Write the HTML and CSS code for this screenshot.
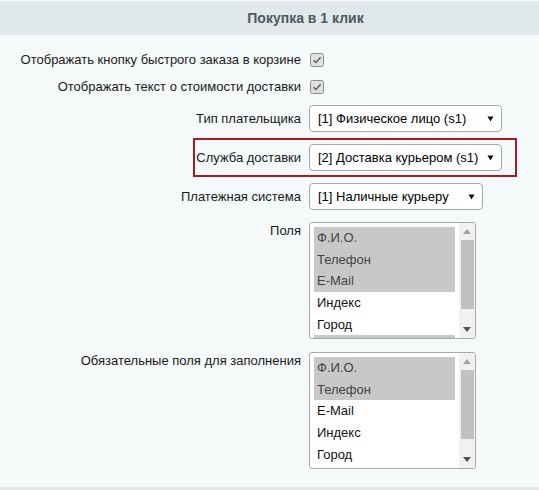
FILE: index.html
```
<!DOCTYPE html>
<html lang="ru">
<head>
<meta charset="utf-8">
<link rel="stylesheet" href="styles.css">
</head>
<body>
<div class="panel">
  <div class="head">Покупка в 1 клик</div>
  <div class="form">
    <div class="row row-cb">
      <label class="lbl">Отображать кнопку быстрого заказа в корзине</label>
      <span class="cb"><svg width="14" height="14" viewBox="0 0 14 14"><rect x="0.5" y="0.5" width="13" height="13" rx="2" fill="#dfdfdf" stroke="#8c8c8c"/><path d="M3.5 7.2 L6 9.6 L10.6 4.2" fill="none" stroke="#5a5a5a" stroke-width="1.4"/></svg></span>
    </div>
    <div class="row row-cb">
      <label class="lbl">Отображать текст о стоимости доставки</label>
      <span class="cb"><svg width="14" height="14" viewBox="0 0 14 14"><rect x="0.5" y="0.5" width="13" height="13" rx="2" fill="#dfdfdf" stroke="#8c8c8c"/><path d="M3.5 7.2 L6 9.6 L10.6 4.2" fill="none" stroke="#5a5a5a" stroke-width="1.4"/></svg></span>
    </div>
    <div class="row row-sel first">
      <label class="lbl">Тип плательщика</label>
      <div class="sel w-wide"><span>[1] Физическое лицо (s1)</span><svg class="arr" width="7" height="6" viewBox="0 0 7 6"><polygon points="0.5,0.5 6.5,0.5 3.5,5.5" fill="#111"/></svg></div>
    </div>
    <div class="row row-sel hl">
      <label class="lbl">Служба доставки</label>
      <div class="sel w-wide"><span>[2] Доставка курьером (s1)</span><svg class="arr" width="7" height="6" viewBox="0 0 7 6"><polygon points="0.5,0.5 6.5,0.5 3.5,5.5" fill="#111"/></svg></div>
    </div>
    <div class="row row-sel">
      <label class="lbl">Платежная система</label>
      <div class="sel w-narrow"><span>[1] Наличные курьеру</span><svg class="arr" width="7" height="6" viewBox="0 0 7 6"><polygon points="0.5,0.5 6.5,0.5 3.5,5.5" fill="#111"/></svg></div>
    </div>
    <div class="row row-multi first">
      <label class="lbl">Поля</label>
      <div class="multi">
        <ul class="opts">
          <li class="on">Ф.И.О.</li>
          <li class="on">Телефон</li>
          <li class="on">E-Mail</li>
          <li>Индекс</li>
          <li>Город</li>
          <li class="on"></li>
        </ul>
        <div class="sb">
          <div class="sb-btn"><svg width="8" height="5" viewBox="0 0 8 5"><polygon points="0,5 8,5 4,0" fill="#a3a3a3"/></svg></div>
          <div class="sb-track"><div class="thumb"></div></div>
          <div class="sb-btn"><svg width="8" height="5" viewBox="0 0 8 5"><polygon points="0,0 8,0 4,5" fill="#505050"/></svg></div>
        </div>
      </div>
    </div>
    <div class="row row-multi second">
      <label class="lbl">Обязательные поля для заполнения</label>
      <div class="multi">
        <ul class="opts">
          <li class="on">Ф.И.О.</li>
          <li class="on">Телефон</li>
          <li>E-Mail</li>
          <li>Индекс</li>
          <li>Город</li>
        </ul>
        <div class="sb">
          <div class="sb-btn"><svg width="8" height="5" viewBox="0 0 8 5"><polygon points="0,5 8,5 4,0" fill="#a3a3a3"/></svg></div>
          <div class="sb-track"><div class="thumb"></div></div>
          <div class="sb-btn"><svg width="8" height="5" viewBox="0 0 8 5"><polygon points="0,0 8,0 4,5" fill="#505050"/></svg></div>
        </div>
      </div>
    </div>
  </div>
  <div class="foot"></div>
</div>
</body>
</html>
```
FILE: styles.css
```
html, body {
  margin: 0;
  padding: 0;
}
body {
  background: #f5f9f9;
  font-family: "Liberation Sans", Arial, sans-serif;
  font-size: 13px;
  color: #000;
  width: 539px;
  height: 490px;
  overflow: hidden;
}
.panel {
  display: flex;
  flex-direction: column;
}
.head {
  margin-top: 1px;
  height: 34px;
  background: #e0e8ea;
  color: #4b5a60;
  font-weight: bold;
  font-size: 14px;
  display: flex;
  align-items: center;
  justify-content: center;
  padding-left: 72px;
}
.form {
  padding-top: 11px;
  display: flex;
  flex-direction: column;
}
.row {
  display: flex;
  align-items: center;
  column-gap: 8px;
  position: relative;
}
.lbl {
  width: 301px;
  flex: none;
  text-align: right;
  line-height: 15px;
  color: #1a1a1a;
}
.row-cb {
  height: 27px;
}
.cb {
  display: flex;
  margin-left: 1px;
}
.row-sel {
  margin-top: 12px;
}
.row-sel.first {
  margin-top: 5px;
}
.sel {
  height: 27px;
  box-sizing: border-box;
  border: 1px solid #a9a9a9;
  border-radius: 4px;
  background: #fff;
  display: flex;
  align-items: center;
  justify-content: space-between;
  padding: 0 7px 0 8px;
  color: #000;
}
.arr {
  margin-right: 0;
}
.w-wide {
  width: 193px;
}
.w-narrow {
  width: 174px;
}
.hl::after {
  content: "";
  position: absolute;
  left: 193px;
  top: -6px;
  width: 320px;
  height: 35px;
  border: 2px solid #a01f27;
}
.row-multi {
  align-items: flex-start;
}
.row-multi .lbl {
  padding-top: 1px;
}
.row-multi.first {
  margin-top: 12px;
}
.row-multi.second {
  margin-top: 13px;
}
.multi {
  width: 167px;
  height: 117px;
  box-sizing: border-box;
  border: 1px solid #a9a9a9;
  border-radius: 3px;
  background: #fff;
  display: flex;
  overflow: hidden;
}
.opts {
  list-style: none;
  margin: 0;
  padding: 4px 4px 0 4px;
  flex: 1;
  overflow: hidden;
}
.opts li {
  height: 21.67px;
  line-height: 21.67px;
  padding-left: 3px;
  color: #111;
  white-space: nowrap;
}
.opts li.on {
  background: #c8c8c8;
  color: #444;
}
.sb {
  width: 16px;
  flex: none;
  background: #f1f1f1;
  display: flex;
  flex-direction: column;
}
.sb-btn {
  height: 17px;
  display: flex;
  align-items: center;
  justify-content: center;
}
.sb-track {
  flex: 1;
  display: flex;
  flex-direction: column;
}
.thumb {
  height: 69px;
  margin: 0 1px 0 2px;
  background: #c1c1c1;
}
.foot {
  margin-top: 18px;
  height: 3px;
  background: #e0e8ea;
}
```
